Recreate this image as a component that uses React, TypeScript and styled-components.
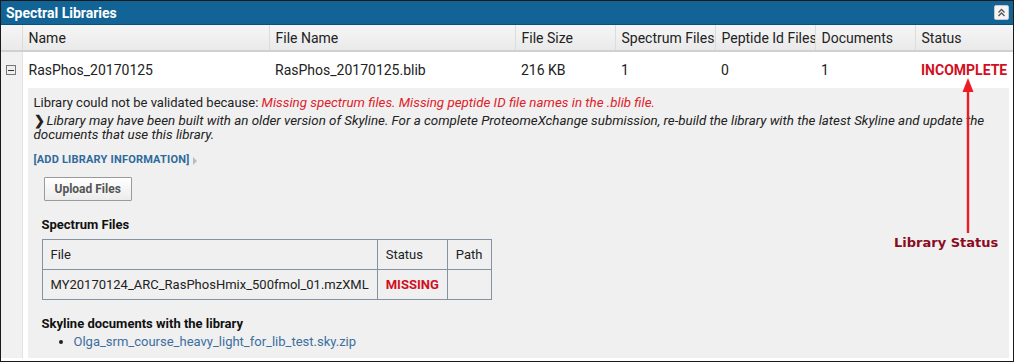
import React from 'react';
import styled, { createGlobalStyle } from 'styled-components';

const GlobalStyle = createGlobalStyle`
  body {
    margin: 0;
    font-family: Roboto, 'Liberation Sans', Arial, sans-serif;
    background: #fff;
  }
`;

const Frame = styled.div`
  position: relative;
  width: 1014px;
  height: 362px;
  box-sizing: border-box;
  border: 1px solid #1a1a1a;
  overflow: hidden;
  background: #fff;
`;

const TitleBar = styled.div`
  display: flex;
  align-items: center;
  justify-content: space-between;
  height: 23px;
  padding: 0 4px 0 5px;
  background: #126497;
  border-bottom: 1px solid #0d4f78;
`;

const Title = styled.span`
  color: #fff;
  font-weight: bold;
  font-size: 14px;
  font-family: Roboto, sans-serif;
`;

const CollapseButton = styled.div`
  width: 13px;
  height: 13px;
  border-radius: 2px;
  background: #f4f4f4;
  border: 1px solid #c8c8c8;
  display: flex;
  align-items: center;
  justify-content: center;
`;

const Grid = styled.table`
  width: 100%;
  border-collapse: collapse;
  table-layout: fixed;
  font-size: 14px;
  color: #222;
`;

const HeadCell = styled.th<{ $w?: number }>`
  box-sizing: border-box;
  width: ${(p) => (p.$w ? `${p.$w}px` : 'auto')};
  height: 26px;
  padding: 0 6px;
  text-align: left;
  font-weight: normal;
  white-space: nowrap;
  overflow: hidden;
  background: linear-gradient(#f6f6f6, #e9e9e9);
  border-right: 1px solid #dcdcdc;
  border-bottom: 2px solid #d0d0d0;
  &:last-child {
    border-right: none;
  }
`;

const ToggleCell = styled.td`
  background: #f1f1f1;
  border-right: 1px solid #e2e2e2;
  vertical-align: top;
  padding: 0;
`;

const Cell = styled.td<{ $status?: boolean }>`
  height: 36px;
  padding: 0 6px;
  white-space: nowrap;
  color: ${(p) => (p.$status ? '#d10f1f' : '#222')};
  font-weight: ${(p) => (p.$status ? 'bold' : 'normal')};
`;

const ExpandBox = styled.div`
  width: 8px;
  height: 8px;
  margin: 13px 0 0 5px;
  border: 1px solid #777;
  background: #eee;
  display: flex;
  align-items: center;
  justify-content: center;
  &::after {
    content: '';
    width: 6px;
    height: 1px;
    background: #333;
  }
`;

const DetailCell = styled.td`
  padding: 0 4px 0 5px;
  vertical-align: top;
`;

const DetailBox = styled.div`
  height: 270px;
  box-sizing: border-box;
  background: #f0f0f0;
  padding: 7px 4px 0 6px;
  font-size: 13px;
  color: #222;
`;

const Line = styled.div`
  line-height: 15px;
`;

const ErrorText = styled.span`
  color: #e0202a;
  font-style: italic;
  font-size: 13.35px;
`;

const Note = styled.div`
  margin-top: 4px;
  font-style: italic;
  font-size: 13.35px;
  line-height: 14px;
`;

const Chevron = styled.span`
  font-style: normal;
  font-weight: bold;
  margin-right: 2px;
`;

const AddInfo = styled.div`
  display: flex;
  align-items: center;
  gap: 4px;
  margin-top: 11px;
  font-size: 11px;
  font-weight: bold;
  color: #2f6a9c;
  letter-spacing: 0.2px;
`;

const Caret = styled.span`
  width: 0;
  height: 0;
  border-top: 4px solid transparent;
  border-bottom: 4px solid transparent;
  border-left: 4px solid #bbb;
  margin-top: 2px;
`;

const UploadButton = styled.button`
  display: block;
  margin: 11px 0 0 10px;
  height: 24px;
  padding: 0 10px;
  font-family: Roboto, sans-serif;
  font-size: 12px;
  font-weight: bold;
  color: #555;
  background: linear-gradient(#ffffff, #ececec);
  border: 1px solid #9a9a9a;
  border-radius: 1px;
`;

const SectionTitle = styled.div<{ $top: number }>`
  margin: ${(p) => p.$top}px 0 0 8px;
  font-weight: bold;
  font-size: 13px;
  color: #111;
`;

const FileTable = styled.table`
  margin: 7px 0 0 8px;
  border-collapse: collapse;
  font-size: 13px;
  color: #222;
`;

const FileCell = styled.td<{ $w: number; $missing?: boolean }>`
  width: ${(p) => p.$w}px;
  height: 30px;
  padding: 0 8px;
  box-sizing: border-box;
  border: 1px solid #8393a3;
  white-space: nowrap;
  color: ${(p) => (p.$missing ? '#d10f1f' : '#222')};
  font-weight: ${(p) => (p.$missing ? 'bold' : 'normal')};
`;

const DocList = styled.ul`
  margin: 3px 0 0 0;
  padding-left: 40px;
  font-size: 13px;
  color: #222;
`;

const DocLink = styled.a`
  color: #3b6fa0;
  text-decoration: none;
`;

const Annotation = styled.div`
  position: absolute;
  left: 893px;
  top: 77px;
  width: 110px;
  display: flex;
  flex-direction: column;
  align-items: flex-start;
  pointer-events: none;
`;

const Arrow = styled.svg`
  margin-left: 68px;
`;

const AnnotationLabel = styled.div`
  margin-top: 2px;
  font-family: 'DejaVu Sans', Verdana, sans-serif;
  font-weight: bold;
  font-size: 13px;
  color: #8b0a1e;
  white-space: nowrap;
`;

const columns: { label: string; w?: number }[] = [
  { label: '', w: 21 },
  { label: 'Name', w: 247 },
  { label: 'File Name', w: 246 },
  { label: 'File Size', w: 100 },
  { label: 'Spectrum Files', w: 100 },
  { label: 'Peptide Id Files', w: 100 },
  { label: 'Documents', w: 100 },
  { label: 'Status' },
];

export default function App() {
  return (
    <>
      <GlobalStyle />
      <Frame>
        <TitleBar>
          <Title>Spectral Libraries</Title>
          <CollapseButton>
            <svg width="9" height="9" viewBox="0 0 9 9">
              <path d="M1.5 4.5 L4.5 1.5 L7.5 4.5 M1.5 8 L4.5 5 L7.5 8" fill="none" stroke="#555" strokeWidth="1.3" />
            </svg>
          </CollapseButton>
        </TitleBar>
        <Grid>
          <thead>
            <tr>
              {columns.map((c, i) => (
                <HeadCell key={i} $w={c.w}>
                  {c.label}
                </HeadCell>
              ))}
            </tr>
          </thead>
          <tbody>
            <tr>
              <ToggleCell>
                <ExpandBox />
              </ToggleCell>
              <Cell>RasPhos_20170125</Cell>
              <Cell>RasPhos_20170125.blib</Cell>
              <Cell>216 KB</Cell>
              <Cell>1</Cell>
              <Cell>0</Cell>
              <Cell>1</Cell>
              <Cell $status>INCOMPLETE</Cell>
            </tr>
            <tr>
              <ToggleCell />
              <DetailCell colSpan={7}>
                <DetailBox>
                  <Line>
                    Library could not be validated because:{' '}
                    <ErrorText>Missing spectrum files. Missing peptide ID file names in the .blib file.</ErrorText>
                  </Line>
                  <Note>
                    <Chevron>❯</Chevron>Library may have been built with an older version of Skyline. For a complete
                    ProteomeXchange submission, re-build the library with the latest Skyline and update the documents
                    that use this library.
                  </Note>
                  <AddInfo>
                    [ADD LIBRARY INFORMATION]
                    <Caret />
                  </AddInfo>
                  <UploadButton>Upload Files</UploadButton>
                  <SectionTitle $top={16}>Spectrum Files</SectionTitle>
                  <FileTable>
                    <tbody>
                      <tr>
                        <FileCell $w={335}>File</FileCell>
                        <FileCell $w={70}>Status</FileCell>
                        <FileCell $w={44}>Path</FileCell>
                      </tr>
                      <tr>
                        <FileCell $w={335}>MY20170124_ARC_RasPhosHmix_500fmol_01.mzXML</FileCell>
                        <FileCell $w={70} $missing>
                          MISSING
                        </FileCell>
                        <FileCell $w={44} />
                      </tr>
                    </tbody>
                  </FileTable>
                  <SectionTitle $top={16}>Skyline documents with the library</SectionTitle>
                  <DocList>
                    <li>
                      <DocLink href="#">Olga_srm_course_heavy_light_for_lib_test.sky.zip</DocLink>
                    </li>
                  </DocList>
                </DetailBox>
              </DetailCell>
            </tr>
          </tbody>
        </Grid>
        <Annotation>
          <Arrow width="12" height="155" viewBox="0 0 12 155">
            <path d="M6 0 L11.5 14 L0.5 14 Z" fill="#ec1c24" />
            <rect x="4.8" y="12" width="2.4" height="143" fill="#ec1c24" />
          </Arrow>
          <AnnotationLabel>Library Status</AnnotationLabel>
        </Annotation>
      </Frame>
    </>
  );
}
